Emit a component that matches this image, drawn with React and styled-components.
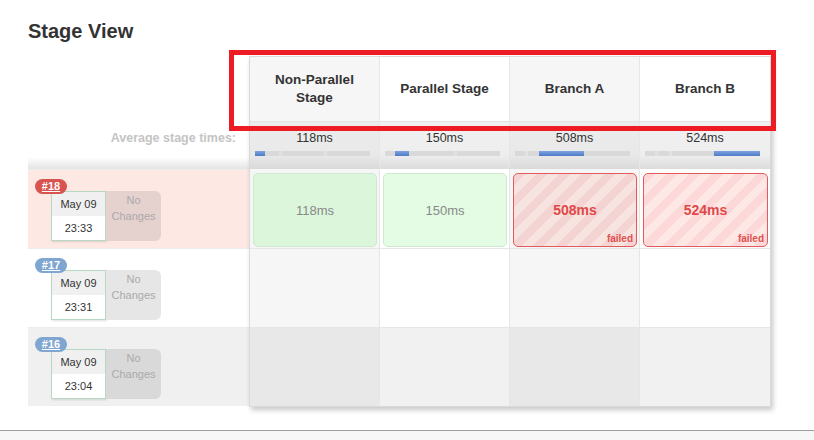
import React from 'react';
import styled, { createGlobalStyle } from 'styled-components';

const GlobalStyle = createGlobalStyle`
  html, body {
    margin: 0;
    padding: 0;
    background: #fff;
    font-family: "Liberation Sans", Arial, sans-serif;
    color: #333;
  }
`;

const BAR_WIDTH = 115;
const BOUNDS = [10, 24, 69];

const stages = [
    { name: 'Non-Parallel Stage', avg: '118ms', start: 0, end: 10 },
    { name: 'Parallel Stage', avg: '150ms', start: 10, end: 24 },
    { name: 'Branch A', avg: '508ms', start: 24, end: 69 },
    { name: 'Branch B', avg: '524ms', start: 69, end: 115 },
];

const builds = [
    { id: 18, date: 'May 09', time: '23:33', status: 'failed', tone: 'failed',
      cells: [
          { text: '118ms', state: 'success' },
          { text: '150ms', state: 'success' },
          { text: '508ms', state: 'failed' },
          { text: '524ms', state: 'failed' },
      ] },
    { id: 17, date: 'May 09', time: '23:31', tone: 'white', cells: [] },
    { id: 16, date: 'May 09', time: '23:04', tone: 'gray', cells: [] },
];

const rowBg = { failed: '#fde8e4', white: '#fff', gray: '#f0f0f0' };
const changesBg = { failed: '#e5d1ce', white: '#e6e6e6', gray: '#d9d9d9' };
const emptyBg = {
    white: ['#f6f6f6', '#fff'],
    gray: ['#e8e8e8', '#f1f1f1'],
    failed: ['#f6f6f6', '#fff'],
};

const Main = styled.div`
  height: 430px;
  padding: 19px 0 0 28px;
  box-sizing: border-box;
`;

const Title = styled.h2`
  margin: 0 0 13px;
  font-size: 20px;
  line-height: 24px;
  font-weight: bold;
  color: #333;
`;

const View = styled.div`
  display: flex;
  align-items: flex-start;
`;

const LeftColumn = styled.div`
  width: 221px;
  display: flex;
  flex-direction: column;
`;

const LeftHeader = styled.div`
  height: 66px;
`;

const AvgLabel = styled.div`
  height: 47px;
  box-sizing: border-box;
  padding: 9px 13px 0 0;
  text-align: right;
  font-size: 12.5px;
  font-weight: bold;
  color: #c4c4c4;
  background: linear-gradient(to bottom, #fff 0%, #fff 75%, #e4e4e4 100%);
`;

const BuildRow = styled.div`
  position: relative;
  height: 79px;
  box-sizing: border-box;
  border-top: 1px solid #ececec;
  background: ${p => rowBg[p.$tone]};
  padding: 21px 0 0 23px;
  display: flex;
  align-items: flex-start;
`;

const Badge = styled.span`
  position: absolute;
  left: 7px;
  top: 9px;
  width: 32px;
  height: 15px;
  border-radius: 8px;
  background: ${p => (p.$failed ? '#d9534f' : '#7fa5d1')};
  color: #fff;
  font-size: 11px;
  font-weight: bold;
  line-height: 15px;
  text-align: center;
  text-decoration: underline;
  z-index: 1;
`;

const DateBox = styled.div`
  width: 55px;
  height: 50px;
  box-sizing: border-box;
  border: 1px solid #b6d9c5;
  box-shadow: 1px 1px 2px rgba(0, 0, 0, 0.12);
  background: #fff;
  display: flex;
  flex-direction: column;
  font-size: 11px;
  color: #333;
  text-align: center;
`;

const DatePart = styled.div`
  height: 24px;
  line-height: 24px;
  background: ${p => (p.$top ? '#f0f0f0' : '#fff')};
`;

const Changes = styled.div`
  width: 55px;
  height: 50px;
  box-sizing: border-box;
  border-radius: 0 6px 6px 0;
  background: ${p => changesBg[p.$tone]};
  color: #aaa;
  font-size: 11px;
  line-height: 16px;
  text-align: center;
  padding-top: 1px;
`;

const StageBox = styled.div`
  position: relative;
  display: grid;
  grid-template-columns: repeat(4, 130px);
  grid-template-rows: 65px 47px 79px 79px 79px;
  border: 1px solid #dadada;
  box-shadow: 2px 3px 5px rgba(0, 0, 0, 0.22);
  background: #fff;
`;

const Cell = styled.div`
  box-sizing: border-box;
  border-right: ${p => (p.$last ? 'none' : '1px solid #e6e6e6')};
`;

const HeadCell = styled(Cell)`
  display: flex;
  align-items: center;
  justify-content: center;
  padding: 0 10px;
  text-align: center;
  font-size: 13.5px;
  font-weight: bold;
  line-height: 18px;
  color: #333;
  background: ${p => (p.$alt ? '#f6f6f6' : '#fff')};
  border-bottom: 1px solid #e2e2e2;
`;

const AvgCell = styled(Cell)`
  padding: 9px 5px 0;
  text-align: center;
  font-size: 12.5px;
  color: #333;
  background: ${p => (p.$alt
        ? 'linear-gradient(to bottom, #ececec 0%, #e9e9e9 70%, #d9d9d9 100%)'
        : 'linear-gradient(to bottom, #f1f1f1 0%, #eeeeee 70%, #dcdcdc 100%)')};
`;

const AvgTime = styled.div`
  line-height: 15px;
  margin-bottom: 5px;
`;

const Track = styled.div`
  position: relative;
  width: ${BAR_WIDTH}px;
  height: 5px;
  background: #d9d9d9;
`;

const Tick = styled.span`
  position: absolute;
  top: 0;
  width: 3px;
  height: 5px;
  background: #e1e1e1;
`;

const Fill = styled.span`
  position: absolute;
  top: 0;
  height: 5px;
  background: linear-gradient(to bottom, #7ea3e0, #4d7bc6);
`;

const RunCell = styled(Cell)`
  padding: 4px 2px 1px 3px;
  background: ${p => p.$bg};
  border-top: ${p => (p.$first ? 'none' : '1px solid #e6e6e6')};
`;

const StatusBox = styled.div`
  position: relative;
  height: 100%;
  box-sizing: border-box;
  border-radius: 5px;
  display: flex;
  align-items: center;
  justify-content: center;
  ${p => (p.$state === 'failed'
        ? `
    border: 1.5px solid #e35a5a;
    color: #e04848;
    font-weight: bold;
    font-size: 14px;
    background: repeating-linear-gradient(135deg,
      ${p.$alt ? '#f4d3d3' : '#fcd8d8'} 0 8px,
      ${p.$alt ? '#f7e3df' : '#fee8e6'} 8px 16px);
  `
        : `
    border: 1px solid #cfe8cf;
    color: #888;
    font-size: 13px;
    background: ${p.$alt ? '#dcf6dc' : '#e3fce3'};
  `)}
`;

const FailedTag = styled.span`
  position: absolute;
  right: 3px;
  bottom: 2px;
  font-size: 10px;
  font-weight: bold;
  color: #e05050;
`;

const Highlight = styled.div`
  position: absolute;
  left: -21px;
  top: -7px;
  width: 547px;
  height: 81px;
  box-sizing: border-box;
  border: 5px solid #ed1c24;
  pointer-events: none;
`;

const Footer = styled.div`
  height: 10px;
  border-top: 1px solid #9e9e9e;
  background: #f7f7f7;
`;

const AvgBar = ({ start, end }) => (
    <Track>
        {BOUNDS.filter(b => b !== start && b !== end).map(b => (
            <Tick key={b} style={{ left: b }} />
        ))}
        <Fill style={{ left: start, width: end - start }} />
    </Track>
);

export default function App() {
    return (
        <>
            <GlobalStyle />
            <Main>
                <Title>Stage View</Title>
                <View>
                    <LeftColumn>
                        <LeftHeader />
                        <AvgLabel>Average stage times:</AvgLabel>
                        {builds.map(b => (
                            <BuildRow key={b.id} $tone={b.tone}>
                                <Badge $failed={b.status === 'failed'}>#{b.id}</Badge>
                                <DateBox>
                                    <DatePart $top>{b.date}</DatePart>
                                    <DatePart>{b.time}</DatePart>
                                </DateBox>
                                <Changes $tone={b.tone}>No<br />Changes</Changes>
                            </BuildRow>
                        ))}
                    </LeftColumn>
                    <StageBox>
                        {stages.map((s, i) => (
                            <HeadCell key={s.name} $alt={i % 2 === 0} $last={i === 3}>{s.name}</HeadCell>
                        ))}
                        {stages.map((s, i) => (
                            <AvgCell key={s.name} $alt={i % 2 === 0} $last={i === 3}>
                                <AvgTime>{s.avg}</AvgTime>
                                <AvgBar start={s.start} end={s.end} />
                            </AvgCell>
                        ))}
                        {builds.map((b, r) => stages.map((s, i) => {
                            const cell = b.cells[i];
                            return (
                                <RunCell
                                    key={`${b.id}-${i}`}
                                    $first={r === 0}
                                    $last={i === 3}
                                    $bg={emptyBg[b.tone][i % 2]}
                                >
                                    {cell && (
                                        <StatusBox $state={cell.state} $alt={i % 2 === 0}>
                                            {cell.text}
                                            {cell.state === 'failed' && <FailedTag>failed</FailedTag>}
                                        </StatusBox>
                                    )}
                                </RunCell>
                            );
                        }))}
                        <Highlight />
                    </StageBox>
                </View>
            </Main>
            <Footer />
        </>
    );
}
